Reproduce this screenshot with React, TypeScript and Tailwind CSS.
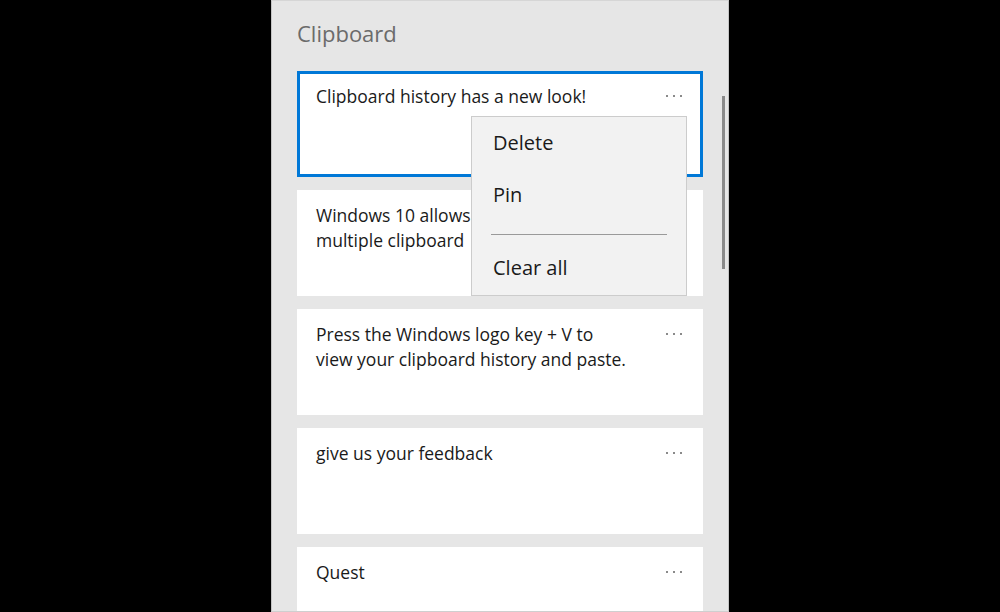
const items = [
  { lines: ['Clipboard history has a new look!'], selected: true },
  { lines: ['Windows 10 allows', 'multiple clipboard'] },
  { lines: ['Press the Windows logo key + V to', 'view your clipboard history and paste.'] },
  { lines: ['give us your feedback'] },
  { lines: ['Quest'] },
]

function MoreDots() {
  return (
    <div className="flex items-center gap-[5px] pt-[1px]">
      <span className="block h-[2px] w-[2px] bg-[#8a8a8a]" />
      <span className="block h-[2px] w-[2px] bg-[#8a8a8a]" />
      <span className="block h-[2px] w-[2px] bg-[#8a8a8a]" />
    </div>
  )
}

function ContextMenu() {
  return (
    <div className="absolute left-[171px] top-[42px] z-10 flex h-[180px] w-[216px] flex-col border border-[#cccccc] bg-[#f2f2f2] text-[20px] text-[#1a1a1a]">
      <div className="flex h-[51px] items-center pl-[21px]">Delete</div>
      <div className="flex h-[53px] items-center pl-[21px]">Pin</div>
      <div className="flex h-[26px] items-center px-[19px]">
        <div className="h-px w-full bg-[#9a9a9a]" />
      </div>
      <div className="flex h-[42px] items-center pl-[21px]">Clear all</div>
    </div>
  )
}

export default function App() {
  return (
    <section
      className="flex h-[612px] w-[1000px] justify-center bg-black"
      style={{ fontFamily: '"Open Sans", "Noto Sans", sans-serif' }}
    >
      <div className="relative flex h-[612px] w-[458px] flex-col overflow-hidden border-x border-t border-b border-x-[#c4c4c4] border-t-[#d6d6d6] border-b-[#cfcfcf] bg-[#e6e6e6] pl-[25px]">
        <h2 className="pt-[18px] text-[22px] leading-[28px] text-[#6b6b6b]">Clipboard</h2>

        <div className="mt-[24px] flex w-[406px] flex-col gap-[13px]">
          {items.map((item, i) => (
            <div
              key={i}
              className={
                item.selected
                  ? 'relative flex h-[106px] shrink-0 justify-between border-[3px] border-[#0078d7] bg-white pl-[16px] pr-[18px] pt-[10px]'
                  : 'relative flex h-[106px] shrink-0 justify-between bg-white pl-[19px] pr-[21px] pt-[13px]'
              }
            >
              <p className="whitespace-nowrap text-[17.5px] leading-[25px] text-[#1a1a1a]">
                {item.lines.map((line, j) => (
                  <span key={j} className="block">
                    {line}
                  </span>
                ))}
              </p>
              <div className="pt-[10px]">
                <MoreDots />
              </div>
              {item.selected && <ContextMenu />}
            </div>
          ))}
        </div>

        <div className="absolute left-[450px] top-[95px] h-[173px] w-[3px] bg-[#8a8a8a]" />
      </div>
    </section>
  )
}
